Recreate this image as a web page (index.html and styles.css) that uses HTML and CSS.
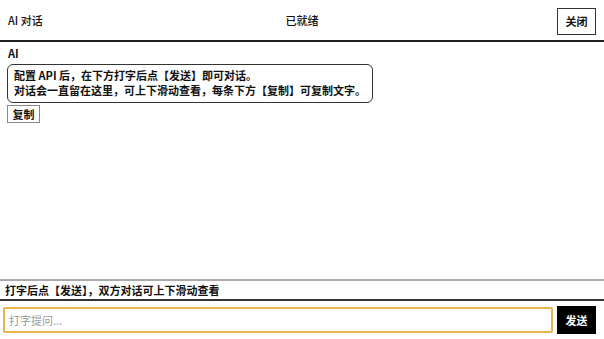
FILE: index.html
```html
<!DOCTYPE html>
<html lang="zh-CN">

<head>
    <meta charset="UTF-8">
    <meta name="viewport" content="width=device-width, initial-scale=1.0">
    <title>AI 对话</title>
    <link rel="stylesheet" href="styles.css">
</head>

<body>
    <div class="app">
        <div class="header">
            <div class="title">AI 对话</div>
            <div class="status">已就绪</div>
            <div class="header-right">
                <button class="btn close-btn">关闭</button>
            </div>
        </div>

        <div class="messages">
            <div class="msg">
                <div class="who">AI</div>
                <div class="bubble">配置 API 后，在下方打字后点【发送】即可对话。<br>对话会一直留在这里，可上下滑动查看，每条下方【复制】可复制文字。</div>
                <button class="btn copy-btn">复制</button>
            </div>
        </div>

        <div class="hint">打字后点【发送】，双方对话可上下滑动查看</div>

        <div class="input-row">
            <input type="text" class="ask" placeholder="打字提问...">
            <button class="btn send-btn">发送</button>
        </div>
    </div>
</body>

</html>
```

FILE: styles.css
```css
* {
    margin: 0;
    padding: 0;
    box-sizing: border-box;
    font-family: "Noto Sans CJK SC", "Noto Sans", sans-serif;
}

body {
    background: #fff;
    color: #111;
}

.app {
    width: 604px;
    height: 339px;
    display: flex;
    flex-direction: column;
}

.header {
    height: 42px;
    display: grid;
    grid-template-columns: 1fr auto 1fr;
    align-items: center;
    padding: 0 8px;
    border-bottom: 2px solid #222;
}

.title {
    font-size: 11px;
    font-weight: 500;
}

.status {
    font-size: 11px;
    font-weight: 500;
}

.header-right {
    display: flex;
    justify-content: flex-end;
}

.btn {
    cursor: pointer;
    font-weight: 700;
    background: #fff;
    color: #111;
}

.close-btn {
    width: 39px;
    height: 27px;
    font-size: 11px;
    border: 1px solid #333;
    margin-top: 2px;
}

.messages {
    flex: 1;
    padding: 3px 7px;
    overflow-y: auto;
}

.who {
    font-size: 11px;
    font-weight: 700;
    padding-left: 1px;
    line-height: 16px;
}

.bubble {
    width: fit-content;
    margin-top: 3px;
    padding: 3px 6px 4px;
    border: 1px solid #333;
    border-radius: 6px;
    font-size: 11px;
    font-weight: 700;
    line-height: 15px;
}

.copy-btn {
    display: block;
    margin-top: 2px;
    width: 33px;
    height: 18px;
    font-size: 11px;
    border: 1px solid #888;
}

.hint {
    height: 22px;
    border-top: 2px solid #aaa;
    border-bottom: 2px solid #333;
    padding: 0 5px;
    font-size: 11px;
    font-weight: 700;
    line-height: 18px;
}

.input-row {
    display: flex;
    align-items: center;
    gap: 4px;
    padding: 5px 8px 5px 3px;
}

.ask {
    flex: 1;
    height: 26px;
    border: 2px solid #e9b44c;
    border-radius: 2px;
    padding: 0 4px;
    font-size: 11px;
    outline: none;
}

.ask::placeholder {
    color: #999;
}

.send-btn {
    width: 39px;
    height: 28px;
    border: none;
    background: #000;
    color: #fff;
    font-size: 11px;
}
```
